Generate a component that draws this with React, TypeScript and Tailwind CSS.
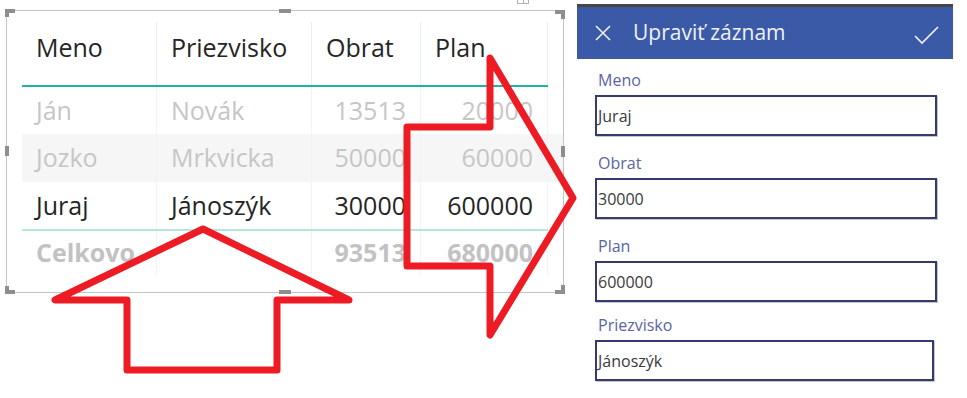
import React from "react";

const font = { fontFamily: '"Open Sans", "Noto Sans", sans-serif' };

function Handle({ className }: { className: string }) {
  return <div className={`absolute bg-[#8e8e8e] ${className}`} />;
}

const cols = ["w-[135px]", "w-[155px]", "w-[109px]", "w-[127px]"];

function Row({
  cells,
  rowCls,
  textCls,
  pad,
}: {
  cells: string[];
  rowCls: string;
  textCls: string;
  pad: string;
}) {
  return (
    <div className={`flex ${rowCls}`}>
      {cells.map((c, i) => (
        <div
          key={i}
          className={`${cols[i]} ${pad} border-r border-[#f1f4f4] text-[25px] leading-[34px] whitespace-nowrap overflow-hidden ${textCls} ${
            i >= 2 ? "text-right pr-[14px]" : "pl-[14px]"
          }`}
        >
          {c}
        </div>
      ))}
    </div>
  );
}

export default function App() {
  return (
    <div className="relative w-[967px] h-[398px] bg-white overflow-hidden" style={font}>
      <div className="flex items-start">
        {/* Left: table visual */}
        <div className="pl-[6px] pt-[10px] w-[577px]">
          <div className="relative w-[558px] h-[283px] border border-[#c4c4c4] pl-[15px] pt-[11px]">
            {/* header */}
            <div className="flex h-[63px]">
              {["Meno", "Priezvisko", "Obrat", "Plan"].map((h, i) => (
                <div
                  key={h}
                  className={`${cols[i]} pt-[8px] pl-[14px] border-r border-[#e3f2ef] text-[25px] leading-[34px] text-[#252525]`}
                >
                  {h}
                </div>
              ))}
            </div>
            <div className="w-[526px] h-[2px] bg-[#1fb3a0]" />
            <Row cells={["Ján", "Novák", "13513", "20000"]} rowCls="h-[47px]" textCls="text-[#c6c6c6]" pad="pt-[6px]" />
            <Row cells={["Jozko", "Mrkvicka", "50000", "60000"]} rowCls="h-[48px] bg-[#f6f6f6]" textCls="text-[#c6c6c6]" pad="pt-[6px]" />
            <Row cells={["Juraj", "Jánoszýk", "30000", "600000"]} rowCls="h-[47px]" textCls="text-[#252525]" pad="pt-[6px]" />
            <div className="w-[526px] h-[2px] bg-[#b4e6df]" />
            <Row cells={["Celkovo", "", "93513", "680000"]} rowCls="h-[45px]" textCls="text-[#c2c2c2] font-bold" pad="pt-[4px]" />

            {/* selection handles */}
            <Handle className="left-[-2px] top-[-2px] w-[10px] h-[4px]" />
            <Handle className="left-[-2px] top-[-2px] w-[4px] h-[8px]" />
            <Handle className="left-[272px] top-[-2px] w-[12px] h-[4px]" />
            <Handle className="right-[-2px] top-[-1px] w-[10px] h-[4px]" />
            <Handle className="right-[-2px] top-[-1px] w-[4px] h-[9px]" />
            <Handle className="left-[-2px] top-[135px] w-[4px] h-[10px]" />
            <Handle className="right-[-2px] top-[135px] w-[4px] h-[11px]" />
            <Handle className="left-[-2px] bottom-[-2px] w-[10px] h-[4px]" />
            <Handle className="left-[-2px] bottom-[-2px] w-[4px] h-[8px]" />
            <Handle className="left-[272px] bottom-[-2px] w-[12px] h-[4px]" />
            <Handle className="right-[-2px] bottom-[-2px] w-[10px] h-[4px]" />
            <Handle className="right-[-2px] bottom-[-2px] w-[4px] h-[9px]" />
            <div className="absolute left-[510px] top-[-11px] w-[12px] h-[4px] border border-t-0 border-[#b0b0b0]">
              <div className="mx-auto w-px h-full bg-[#b0b0b0]" />
            </div>
          </div>
        </div>

        {/* Right: edit form */}
        <div className="w-[376px] pt-[4px]">
          <div className="h-[3px] bg-[#464646]" />
          <div className="h-[52px] bg-[#3a59a7] flex items-center pl-[18px] pr-[14px]">
            <svg width="16" height="16" viewBox="0 0 16 16" className="shrink-0">
              <path d="M1 1L15 15M15 1L1 15" stroke="#eef1f8" strokeWidth="1.6" fill="none" />
            </svg>
            <span className="ml-[22px] text-[21px] leading-[28px] text-[#eef1f8] pb-[2px]">Upraviť záznam</span>
            <svg width="25" height="19" viewBox="0 0 25 19" className="ml-auto mt-[4px]">
              <path d="M1 10L8 17L24 1" stroke="#eef1f8" strokeWidth="1.7" fill="none" />
            </svg>
          </div>
          <div className="pl-[18px]">
            <Field label="Meno" value="Juraj" labelTop="mt-[10px]" w="w-[342px]" />
            <Field label="Obrat" value="30000" labelTop="mt-[16px]" w="w-[342px]" />
            <Field label="Plan" value="600000" labelTop="mt-[16px]" w="w-[342px]" />
            <Field label="Priezvisko" value="Jánoszýk" labelTop="mt-[12px]" w="w-[339px]" />
          </div>
        </div>
      </div>

      {/* red arrows overlay */}
      <svg className="absolute left-0 top-0 pointer-events-none" width="967" height="398" viewBox="0 0 967 398">
        <path
          d="M203 229 L55 300 L127 300 L127 370 L277 370 L277 300 L349 300 Z"
          fill="none"
          stroke="#ed1c24"
          strokeWidth="7"
          strokeLinejoin="round"
        />
        <path
          d="M407 127 L490 127 L490 58 L573 198 L490 335 L490 266 L407 266 Z"
          fill="none"
          stroke="#ed1c24"
          strokeWidth="7"
          strokeLinejoin="round"
        />
      </svg>
    </div>
  );
}

function Field({
  label,
  value,
  labelTop,
  w,
}: {
  label: string;
  value: string;
  labelTop: string;
  w: string;
}) {
  return (
    <div>
      <div className={`${labelTop} pl-[3px] text-[16px] leading-[22px] text-[#5b64a3]`}>{label}</div>
      <div
        className={`mt-[4px] ${w} h-[41px] border-2 border-[#353a70] shadow-[1px_1px_0_#c6c6c6] flex items-center pl-[1px] text-[16px] leading-[22px] text-[#3a3a3a]`}
      >
        {value}
      </div>
    </div>
  );
}
